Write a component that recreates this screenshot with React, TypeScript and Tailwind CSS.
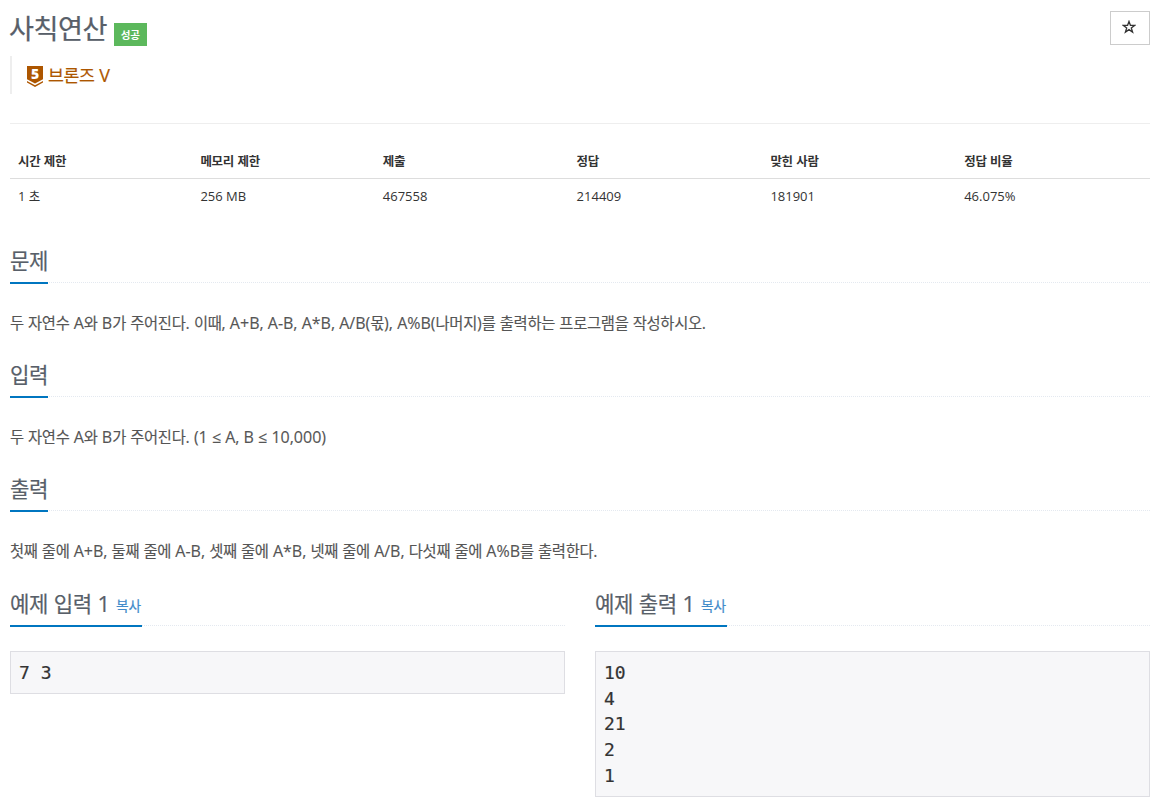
import React from "react";

const columns = [
  { title: "시간 제한", value: "1 초", width: "w-[16%]" },
  { title: "메모리 제한", value: "256 MB", width: "w-[16%]" },
  { title: "제출", value: "467558", width: "w-[17%]" },
  { title: "정답", value: "214409", width: "w-[17%]" },
  { title: "맞힌 사람", value: "181901", width: "w-[17%]" },
  { title: "정답 비율", value: "46.075%", width: "w-[17%]" },
];

const sections = [
  {
    title: "문제",
    body: "두 자연수 A와 B가 주어진다. 이때, A+B, A-B, A*B, A/B(몫), A%B(나머지)를 출력하는 프로그램을 작성하시오.",
  },
  { title: "입력", body: "두 자연수 A와 B가 주어진다. (1 ≤ A, B ≤ 10,000)" },
  {
    title: "출력",
    body: "첫째 줄에 A+B, 둘째 줄에 A-B, 셋째 줄에 A*B, 넷째 줄에 A/B, 다섯째 줄에 A%B를 출력한다.",
  },
];

const samples = [
  { title: "예제 입력 1", data: "7 3" },
  { title: "예제 출력 1", data: "10\n4\n21\n2\n1" },
];

// Hangul is set a little smaller and tighter than the latin text around it
const Ko = ({ children }: { children: string }) => (
  <>
    {children.split(/([가-힣]+)/).map((part, i) =>
      i % 2 === 1 ? (
        <span key={i} className="text-[0.96em] tracking-[-0.019em]">
          {part}
        </span>
      ) : (
        part
      )
    )}
  </>
);

const Headline = ({ title, copy }: { title: string; copy?: boolean }) => (
  <div className="flex h-[37px] border-b border-dotted border-[#e4e9f0]">
    <h2 className="-mb-[2px] h-[38px] shrink-0 whitespace-nowrap border-b-2 border-[#0076c0] text-[22px] leading-[29px] text-[#585f69] [-webkit-text-stroke:0.2px]">
      <Ko>{title}</Ko>
      {copy && (
        <a className="ml-[6px] mr-px inline-block align-[1px] text-[14.3px] leading-4 text-[#428bca]">
          <Ko>복사</Ko>
        </a>
      )}
    </h2>
  </div>
);

const TierIcon = () => (
  <svg className="mt-[2px] h-[21px] w-4 overflow-visible" viewBox="0 0 16 21">
    <path d="M0 0h16v13.2L8 17.4 0 13.2z" fill="#ad5600" />
    <path d="M0 15l8 4.2 8-4.2v1.6L8 20.9 0 16.6z" fill="#ad5600" />
    <text
      x="8"
      y="13.2"
      textAnchor="middle"
      fill="#fff"
      className="font-['Open_Sans'] text-[14px] font-extrabold"
    >
      5
    </text>
  </svg>
);

const App = () => {
  return (
    <div className="min-h-[801px] w-[1164px] bg-white pl-[10px] pr-[14px] font-['Open_Sans','Noto_Sans_CJK_KR',sans-serif] text-[#333]">
      <div className="flex h-14 items-start justify-between">
        <div className="flex items-start">
          <h1 className="-ml-px text-[28.3px] leading-[56px] text-[#585f69] [-webkit-text-stroke:0.25px]">
            <Ko>사칙연산</Ko>
          </h1>
          <span className="ml-[7px] mt-[23px] flex h-[23px] w-[33px] items-center justify-center bg-[#5cb85c] pt-[2px] text-[11px] font-bold text-white">
            <Ko>성공</Ko>
          </span>
        </div>
        <button className="mt-[11px] flex h-[34px] w-10 items-center justify-center border border-[#ccc]">
          <svg className="-ml-[2px] -mt-[3px] h-[14px] w-[14px]" viewBox="0 0 14 14" fill="none" stroke="#333" strokeWidth="1.3">
            <path d="M7 1.4l1.4 3.9 4.4.1-3.5 2.5 1.3 4.2L7 9.6l-3.6 2.5 1.3-4.2L1.2 5.4l4.4-.1z" />
          </svg>
        </button>
      </div>

      <div className="flex h-[38px] items-center gap-[5px] border-l-2 border-[#eee] pl-[15px] text-[18px] text-[#ad5600] [-webkit-text-stroke:0.2px]">
        <TierIcon />
        <span>
          <Ko>브론즈 V</Ko>
        </span>
      </div>

      <hr className="mt-[29px] border-[#eee]" />

      <table className="mt-[19px] w-full table-fixed text-left text-[13px]">
        <thead>
          <tr className="h-[35px] border-b border-[#ddd]">
            {columns.map((col) => (
              <th key={col.title} className={`${col.width} px-2 pt-[3px] font-bold`}>
                <Ko>{col.title}</Ko>
              </th>
            ))}
          </tr>
        </thead>
        <tbody>
          <tr className="h-9">
            {columns.map((col) => (
              <td key={col.title} className="px-2 pt-[7px] align-baseline leading-5">
                <Ko>{col.value}</Ko>
              </td>
            ))}
          </tr>
        </tbody>
      </table>

      <div className="mt-8">
        {sections.map((section) => (
          <section key={section.title} className="h-[114px]">
            <Headline title={section.title} />
            <p className="mt-[27px] whitespace-nowrap text-base leading-[26px] text-[#555] [-webkit-text-stroke:0.15px]">
              <Ko>{section.body}</Ko>
            </p>
          </section>
        ))}
      </div>

      <div className="mt-px grid grid-cols-2 gap-[30px]">
        {samples.map((sample) => (
          <section key={sample.title}>
            <Headline title={sample.title} copy />
            <pre className="mt-[25px] border border-[#dedee3] bg-[#f7f7f9] px-[8px] pb-[7px] pt-2 font-['DejaVu_Sans_Mono',monospace] text-[18px] leading-[25.7px] text-[#333] [-webkit-text-stroke:0.2px]">
              {sample.data}
            </pre>
          </section>
        ))}
      </div>
    </div>
  );
};

export default App;
